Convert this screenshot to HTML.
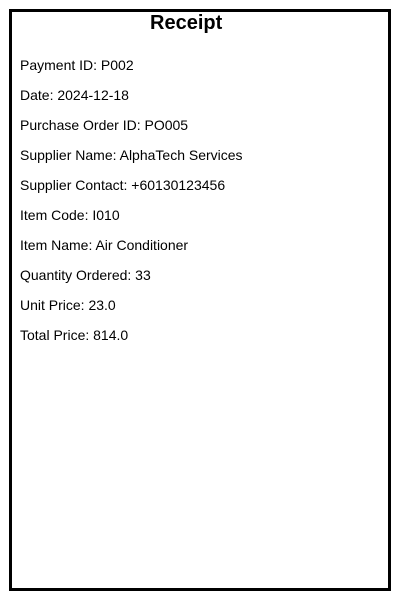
<!DOCTYPE html>
<html><head><style>
body{margin:0;background:#fff;width:400px;height:600px;position:relative;font-family:"Liberation Sans",Arial,sans-serif;}
.box{position:absolute;left:9px;top:9px;width:376px;height:576px;border:3px solid #000;}
h1{position:absolute;left:150px;top:11px;margin:0;font-size:20px;font-weight:bold;line-height:24px;}
.l{position:absolute;left:20px;font-size:14px;line-height:16px;}
</style></head><body>
<div class="box"></div>
<h1>Receipt</h1>
<div class="l" style="top:57px">Payment ID: P002</div>
<div class="l" style="top:87px">Date: 2024-12-18</div>
<div class="l" style="top:117px">Purchase Order ID: PO005</div>
<div class="l" style="top:147px">Supplier Name: AlphaTech Services</div>
<div class="l" style="top:177px">Supplier Contact: +60130123456</div>
<div class="l" style="top:207px">Item Code: I010</div>
<div class="l" style="top:237px">Item Name: Air Conditioner</div>
<div class="l" style="top:267px">Quantity Ordered: 33</div>
<div class="l" style="top:297px">Unit Price: 23.0</div>
<div class="l" style="top:327px">Total Price: 814.0</div>
</body></html>
